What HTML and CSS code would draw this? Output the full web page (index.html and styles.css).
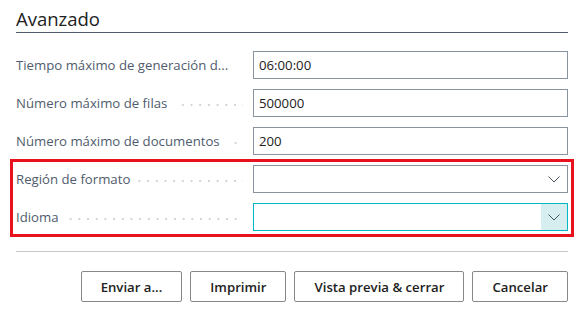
FILE: index.html
```html
<!DOCTYPE html>
<html lang="es">
<head>
    <meta charset="UTF-8">
    <title>Avanzado</title>
    <link rel="stylesheet" href="styles.css">
</head>
<body>
<div class="panel">
    <h2 class="section-title">Avanzado</h2>

    <div class="fields">
        <div class="field">
            <label class="field-label"><span class="field-text">Tiempo máximo de generación d...</span><span class="leader"></span></label>
            <input class="field-input" type="text" value="06:00:00">
        </div>
        <div class="field">
            <label class="field-label"><span class="field-text">Número máximo de filas</span><span class="leader"></span></label>
            <input class="field-input" type="text" value="500000">
        </div>
        <div class="field">
            <label class="field-label"><span class="field-text">Número máximo de documentos</span><span class="leader"></span></label>
            <input class="field-input" type="text" value="200">
        </div>

        <div class="highlight">
            <div class="field">
                <label class="field-label"><span class="field-text">Región de formato</span><span class="leader"></span></label>
                <div class="select">
                    <span class="select-value"></span>
                    <span class="select-arrow">
                        <svg width="12" height="7" viewBox="0 0 12 7"><path d="M0.5 0.5 L6 6 L11.5 0.5" fill="none" stroke="#4a5563" stroke-width="1"/></svg>
                    </span>
                </div>
            </div>
            <div class="field">
                <label class="field-label"><span class="field-text">Idioma</span><span class="leader"></span></label>
                <div class="select select-focus">
                    <span class="select-value"></span>
                    <span class="select-arrow">
                        <svg width="12" height="7" viewBox="0 0 12 7"><path d="M0.5 0.5 L6 6 L11.5 0.5" fill="none" stroke="#4a5563" stroke-width="1"/></svg>
                    </span>
                </div>
            </div>
        </div>
    </div>

    <div class="actions">
        <button class="btn">Enviar a...</button>
        <button class="btn">Imprimir</button>
        <button class="btn">Vista previa &amp; cerrar</button>
        <button class="btn">Cancelar</button>
    </div>
</div>
</body>
</html>
```

FILE: styles.css
```css
body { margin: 0; background: #fff; font-family: "Segoe UI", "Open Sans", sans-serif; color: #212121; }
.panel { padding: 0 18px 0 16px; }

.section-title { font-size: 18.5px; font-weight: 400; margin: 0; padding-top: 5px; height: 27px; line-height: 27px; border-bottom: 1px solid #505c6d; }

.fields { display: flex; flex-direction: column; gap: 10px; margin-top: 18px; }
.field { display: flex; align-items: center; height: 28px; }
.field-label { width: 227px; margin-right: 10px; display: flex; align-items: center; font-size: 13.2px; color: #505c6d; white-space: nowrap; overflow: hidden; }
.leader { flex: 1; height: 2px; margin-left: 8px; margin-top: 4px; background-image: linear-gradient(to right, #d4d4d4 2px, transparent 2px); background-size: 8.7px 2px; background-repeat: repeat-x; background-position: right center; direction: rtl; }

.field-input { flex: 1; box-sizing: border-box; height: 28px; border: 1px solid #8a94a1; padding: 0 5px; font-family: inherit; font-size: 13.2px; color: #212121; outline: none; }

.highlight { display: flex; flex-direction: column; gap: 10px; margin: -6px -6px; padding: 3px; border: 3px solid #e8121f; }

.select { flex: 1; box-sizing: border-box; height: 28px; border: 1px solid #8a94a1; display: flex; }
.select-value { flex: 1; }
.select-arrow { width: 26px; display: flex; align-items: center; justify-content: center; padding-top: 1px; }
.select-focus { border-color: #00b7c3; }
.select-focus .select-arrow { background: #d6eef0; }

.actions { margin-top: 20px; border-top: 1px solid #c8c8c8; padding-top: 19px; display: flex; justify-content: flex-end; gap: 8px; }
.btn { height: 31px; padding: 0 19px; background: #fff; border: 1px solid #8a8886; border-radius: 2px; font-family: inherit; font-size: 13.2px; font-weight: 600; color: #212121; }
```
